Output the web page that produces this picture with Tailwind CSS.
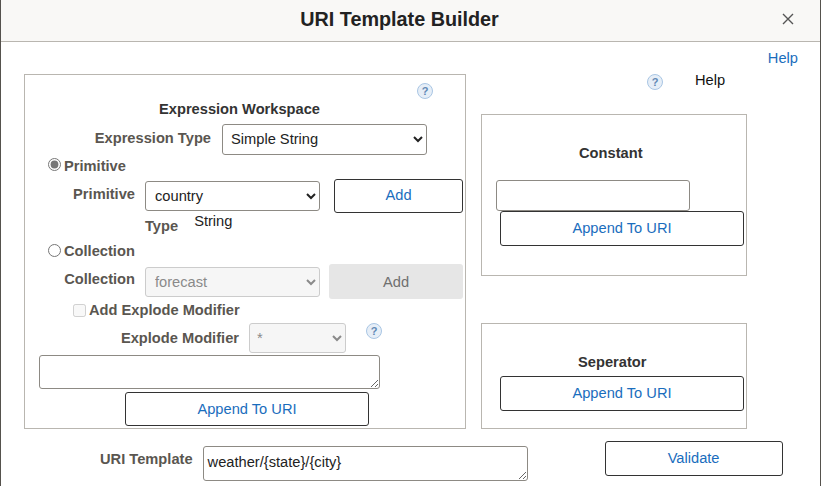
<!DOCTYPE html>
<html lang="en">
<head>
    <meta charset="UTF-8">
    <title>URI Template Builder</title>
    <script src="https://cdn.jsdelivr.net/npm/@tailwindcss/browser@4"></script>
</head>
<body class="bg-white">
    <div class="w-[821px] h-[486px] overflow-hidden border-x border-[#55524d] font-['Liberation_Sans',Arial,sans-serif] text-[14.67px] text-[#333]">
        <!-- Header -->
        <div class="relative h-[42px] bg-[#f9f8f6] border-b border-[#b9b6b0] flex items-center justify-center pr-[22px]">
            <h1 class="text-[19.8px] font-bold text-[#222] -mt-[1px]">URI Template Builder</h1>
            <svg class="absolute left-[781px] top-[13px] w-3 h-3" viewBox="0 0 12 12" stroke="#555" stroke-width="1.4" fill="none"><path d="M1 1 L11 11 M11 1 L1 11"/></svg>
        </div>

        <!-- Top help link -->
        <div class="h-[32px] flex justify-end pr-[22px] pt-[8px]">
            <a class="text-[#1a6dbd] leading-[16px]">Help</a>
        </div>

        <div class="flex pl-[23px]">
            <!-- Expression workspace -->
            <div class="w-[442px] h-[355px] border border-[#b9b6b0] shrink-0">
                <div class="h-[24px] pt-[8px] pl-[392px]">
                    <span class="block w-4 h-4 rounded-full border border-[#a9c6e4] bg-[#e6eef7] text-center text-[11px] leading-[14px] font-bold text-[#5f88b5]">?</span>
                </div>
                <div class="mt-[1px] h-[18px] pl-[134px] font-bold leading-[18px] text-[#333]">Expression Workspace</div>
                <div class="mt-[6px] flex items-center h-[31px]">
                    <label class="w-[186px] text-right font-bold text-[#5a5650] -mt-[4px]">Expression Type</label>
                    <select class="ml-[11px] w-[205px] h-[31px] pl-[4px] pb-[1px] border border-[#8d8a84] rounded-[3px] text-[#222] bg-white"><option>Simple String</option></select>
                </div>
                <div class="h-[20px] pl-[23px] flex items-center">
                    <input type="radio" checked class="w-[13px] h-[13px] m-0 -mt-[1px] accent-[#777]">
                    <span class="ml-[3px] mt-[1px] font-bold text-[#5a5650]">Primitive</span>
                </div>
                <div class="mt-[4px] flex items-center h-[34px]">
                    <label class="w-[110px] text-right font-bold text-[#5a5650] -mt-[5px]">Primitive</label>
                    <select class="ml-[10px] w-[175px] h-[30px] pl-[5px] border border-[#8d8a84] rounded-[3px] text-[#222] bg-white"><option>country</option></select>
                    <button class="ml-[14px] w-[129px] h-[34px] pb-[2px] border border-[#333] rounded-[3px] bg-white text-[#1a6dbd]">Add</button>
                </div>
                <div class="h-[22px] flex pl-[120px] leading-[16px]">
                    <span class="font-bold text-[#5a5650] mt-[5px]">Type</span>
                    <span class="ml-[16px] text-[#222]">String</span>
                </div>
                <div class="mt-[6px] h-[20px] pl-[23px] flex items-center">
                    <input type="radio" class="w-[13px] h-[13px] m-0 -mt-[1px]">
                    <span class="ml-[3px] font-bold text-[#5a5650]">Collection</span>
                </div>
                <div class="mt-[3px] flex items-center h-[35px]">
                    <label class="w-[110px] text-right font-bold text-[#5a5650] -mt-[5px]">Collection</label>
                    <select disabled class="ml-[10px] w-[175px] h-[30px] pl-[5px] border border-[#ccc] rounded-[3px] text-[#8a8a8a] bg-[#f6f6f6]"><option>forecast</option></select>
                    <button class="ml-[9px] w-[134px] h-[35px] rounded-[3px] bg-[#e6e6e6] text-[#6f6f6f]">Add</button>
                </div>
                <div class="mt-[1px] h-[20px] pl-[48px] flex items-center">
                    <input type="checkbox" disabled class="w-[13px] h-[13px] m-0">
                    <span class="ml-[3px] font-bold text-[#5a5650]">Add Explode Modifier</span>
                </div>
                <div class="mt-[3px] relative flex items-center h-[30px]">
                    <label class="w-[214px] text-right font-bold text-[#5a5650]">Explode Modifier</label>
                    <select disabled class="ml-[10px] w-[97px] h-[30px] pl-[3px] border border-[#ccc] rounded-[3px] text-[#8a8a8a] bg-[#f6f6f6]"><option>*</option></select>
                    <span class="ml-[20px] -mt-[15px] w-4 h-4 rounded-full border border-[#a9c6e4] bg-[#e6eef7] text-center text-[11px] leading-[14px] font-bold text-[#5f88b5]">?</span>
                </div>
                <textarea class="block mt-[2px] ml-[14px] w-[341px] h-[34px] border border-[#8d8a84] rounded-[3px]"></textarea>
                <button class="block mt-[3px] ml-[100px] w-[244px] h-[34px] pb-[1px] border border-[#333] rounded-[3px] bg-white text-[#1a6dbd]">Append To URI</button>
            </div>

            <!-- Right column -->
            <div class="ml-[15px] w-[266px] shrink-0">
                <div class="h-[40px] relative">
                    <span class="absolute left-[166px] top-0 w-4 h-4 rounded-full border border-[#a9c6e4] bg-[#e6eef7] text-center text-[11px] leading-[14px] font-bold text-[#5f88b5]">?</span>
                    <span class="absolute left-[214px] -top-[5px] text-[#111]">Help</span>
                </div>
                <div class="h-[162px] border border-[#b9b6b0]">
                    <div class="mt-[29px] h-[18px] pl-[97px] font-bold leading-[18px] text-[#333]">Constant</div>
                    <input type="text" class="block mt-[18px] ml-[14px] w-[194px] h-[31px] border border-[#8d8a84] rounded-[3px]">
                    <button class="block ml-[18px] w-[244px] h-[35px] pb-[2px] border border-[#333] rounded-[3px] bg-white text-[#1a6dbd]">Append To URI</button>
                </div>
                <div class="mt-[47px] h-[106px] border border-[#b9b6b0]">
                    <div class="mt-[29px] h-[18px] pl-[96px] font-bold leading-[18px] text-[#333]">Seperator</div>
                    <button class="block mt-[5px] ml-[18px] w-[244px] h-[35px] pb-[2px] border border-[#333] rounded-[3px] bg-white text-[#1a6dbd]">Append To URI</button>
                </div>
            </div>
        </div>

        <!-- URI template row -->
        <div class="flex items-start pl-[99px] mt-[12px]">
            <label class="mt-[7px] font-bold text-[#5a5650]">URI Template</label>
            <textarea class="ml-[10px] mt-[5px] w-[325px] h-[35px] pl-[4px] pt-[7px] border border-[#8d8a84] rounded-[3px] text-[#222] leading-[16px]">weather/{state}/{city}</textarea>
            <button class="ml-[77px] w-[178px] h-[35px] pb-[2px] border border-[#333] rounded-[3px] bg-white text-[#1a6dbd]">Validate</button>
        </div>
    </div>
</body>
</html>
